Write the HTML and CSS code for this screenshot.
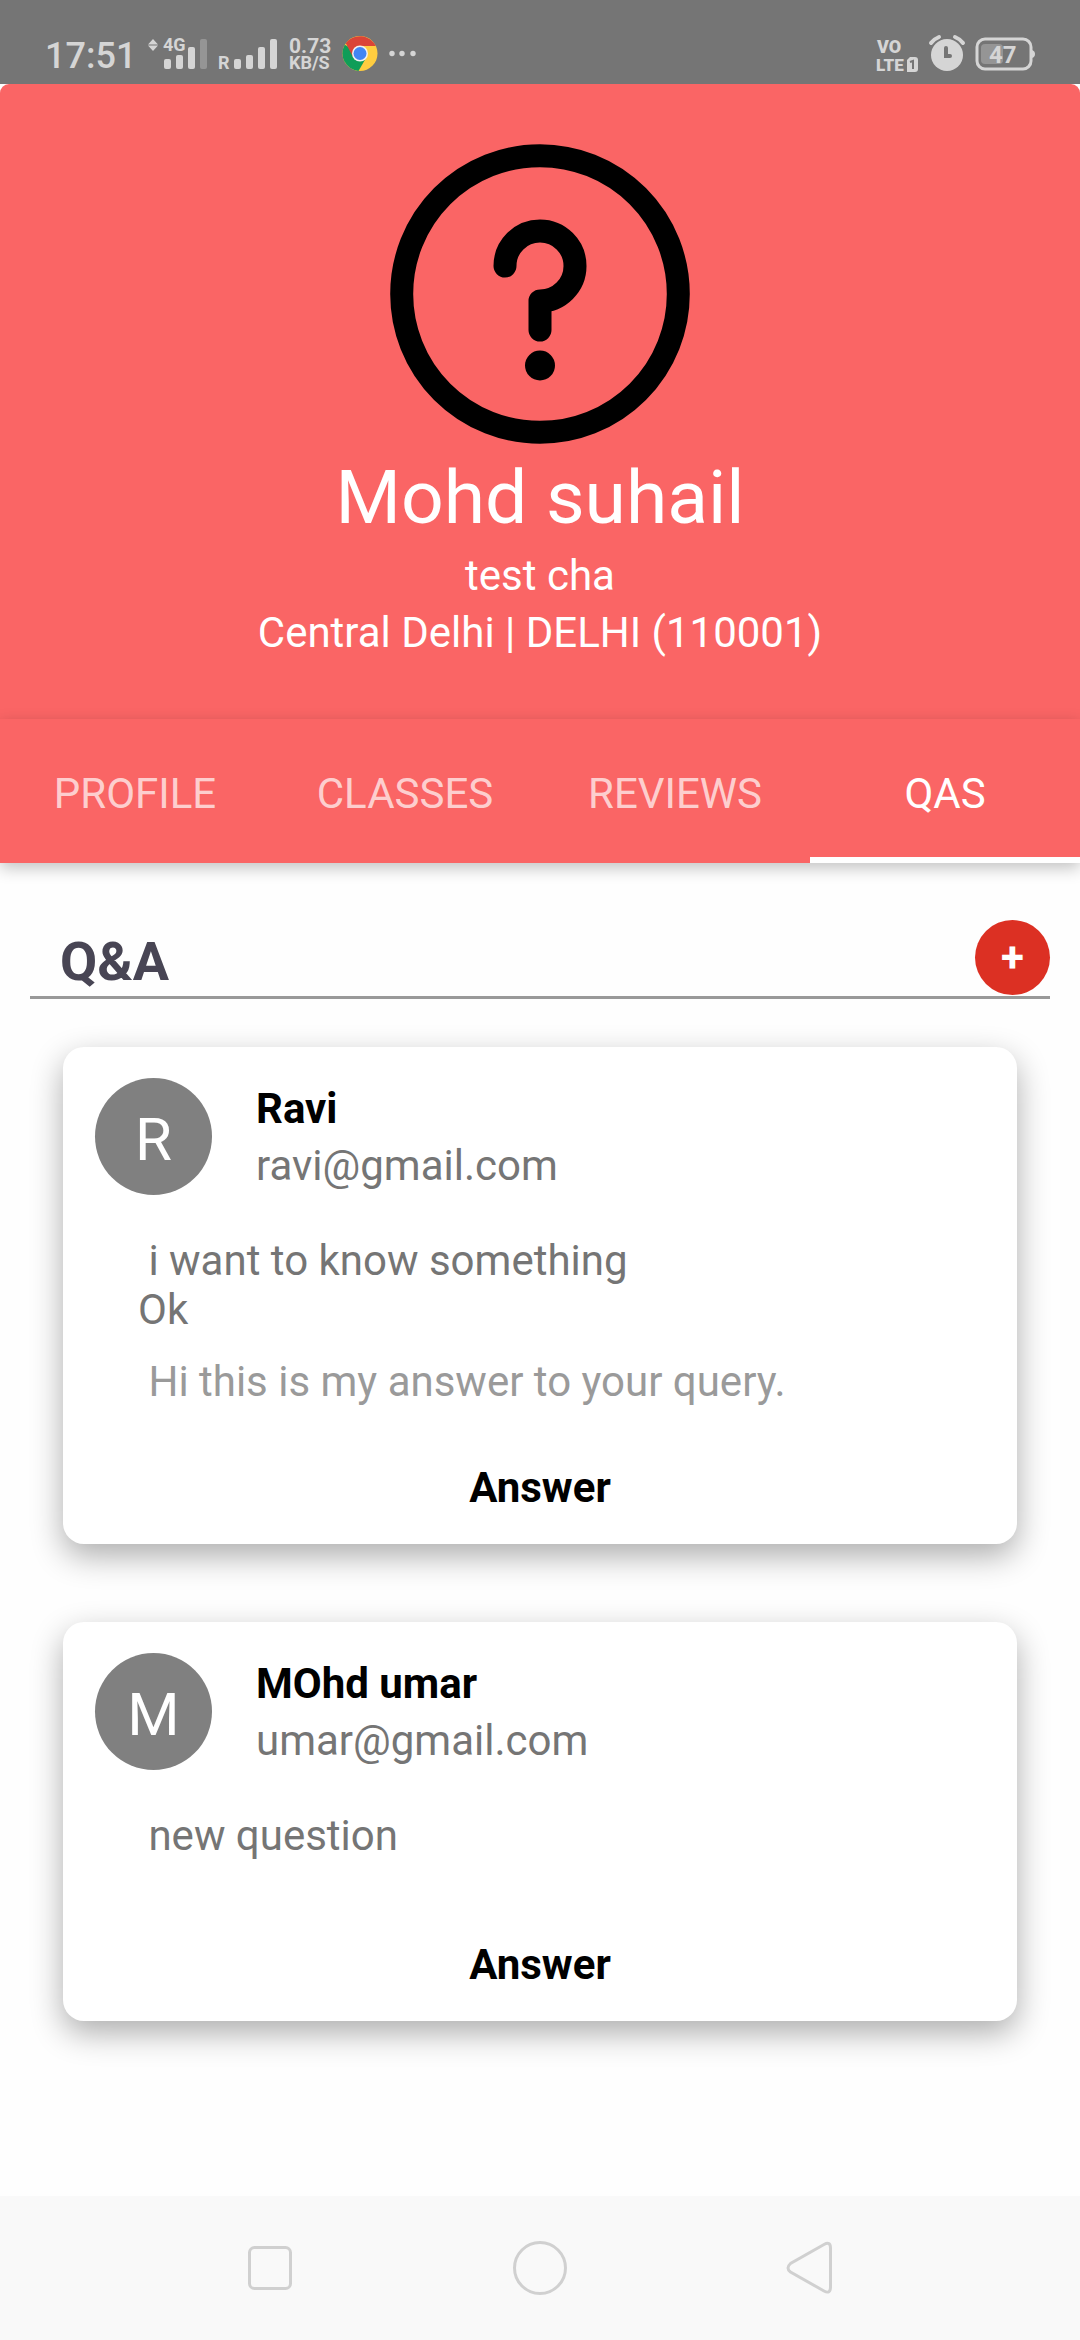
FILE: index.html
```html
<!DOCTYPE html>
<html lang="en">
<head>
<meta charset="utf-8">
<meta name="viewport" content="width=device-width">
<title>Mohd suhail – Q&amp;A</title>
<link rel="stylesheet" href="styles.css">
</head>
<body>
<div class="screen">
  <div class="status">
    <span class="clock">17:51</span>
    <svg class="status-icon" width="60" height="40" viewBox="0 0 60 40">
      <path d="M5 5l5 5.500H0zM5 17l5-5.500H0z"/>
      <text class="tiny-label" x="15" y="17">4G</text>
      <rect x="16" y="25" width="7" height="10" rx="2"/>
      <rect x="28" y="21" width="7" height="14" rx="2"/>
      <rect x="40" y="13" width="7" height="22" rx="2"/>
      <rect class="dim" x="52" y="5" width="7" height="30" rx="2"/>
    </svg>
    <svg class="status-icon" width="59" height="40" viewBox="0 0 59 40">
      <text class="tiny-label" x="-1" y="35">R</text>
      <rect x="15" y="25" width="7" height="10" rx="2"/>
      <rect x="27" y="21" width="7" height="14" rx="2"/>
      <rect x="39" y="13" width="7" height="22" rx="2"/>
      <rect x="51" y="5" width="7" height="30" rx="2"/>
    </svg>
    <svg class="status-icon" width="42" height="40" viewBox="0 0 42 40">
      <text class="speed" x="0" y="19">0.73</text>
      <text class="tiny-label" x="0" y="35">KB/S</text>
    </svg>
    <svg class="status-icon" width="36" height="40" viewBox="0 0 36 40">
      <circle cx="18" cy="19.500" r="17.500" fill="#ffcd40"/>
      <path d="M18 19.500L2.800 10.800A17.500 17.500 0 0 0 16.500 36.900L24 24z" fill="#0f9d58"/>
      <path d="M18 19.500L10.700 22.500L3.800 9.300A17.500 17.500 0 0 1 33.700 12.100H18z" fill="#db4437"/>
      <circle cx="18" cy="19.500" r="8" fill="#f1f1f1"/>
      <circle cx="18" cy="19.500" r="6.500" fill="#4285f4"/>
    </svg>
    <svg class="status-icon" width="27" height="40" viewBox="0 0 27 40">
      <circle cx="3" cy="19.500" r="2.700"/><circle cx="13" cy="19.500" r="2.700"/><circle cx="24" cy="19.500" r="2.700"/>
    </svg>
    <svg class="status-icon status-right" width="42" height="40" viewBox="0 0 42 40">
      <text class="volte" x="1" y="19">VO</text>
      <text class="volte-small" x="0" y="37">LTE</text>
      <path d="M34 23h5a3 3 0 0 1 3 3v9a3 3 0 0 1-3 3h-8V26z"/>
      <path class="cut" d="M34 28l3-1v8"/>
    </svg>
    <svg class="status-icon" width="36" height="40" viewBox="0 0 36 40">
      <circle cx="18" cy="21" r="16"/>
      <path class="ear" d="M2 9Q5 5 10 3M34 9Q31 5 26 3"/>
      <path class="hands" d="M17 14v8h4"/>
    </svg>
    <svg class="status-icon" width="59" height="40" viewBox="0 0 59 40">
      <rect class="shell" x="1" y="5" width="54" height="30" rx="8"/>
      <path d="M56 16q3 1 3 4t-3 4z"/>
      <rect class="dim" x="5" y="10" width="22" height="20" rx="4"/>
      <text class="charge" x="13" y="29">47</text>
    </svg>
  </div>

  <header class="profile">
    <svg class="photo" width="300" height="300" viewBox="0 0 300 300" role="img" aria-label="No photo">
      <circle cx="150" cy="150" r="138.300"/>
      <path d="M115 122a35 35 0 1 1 35 35v29"/>
      <circle class="dot" cx="150" cy="221.500" r="15"/>
    </svg>
    <h1 class="name">Mohd suhail</h1>
    <p class="detail">test cha</p>
    <p class="detail">Central Delhi | DELHI (110001)</p>
  </header>

  <nav class="tabs">
    <a class="tab" href="#profile">PROFILE</a>
    <a class="tab" href="#classes">CLASSES</a>
    <a class="tab" href="#reviews">REVIEWS</a>
    <a class="tab tab-active" href="#qas" aria-current="page">QAS</a>
  </nav>

  <main class="content" id="qas">
    <div class="section-head">
      <h2 class="section-title">Q&amp;A</h2>
      <button class="add" type="button" aria-label="Add a question">+</button>
    </div>

    <div class="cards">
      <article class="card">
        <div class="author">
          <span class="avatar">R</span>
          <div>
            <h3 class="author-name">Ravi</h3>
            <p class="author-mail">ravi@gmail.com</p>
          </div>
        </div>
        <p class="question"> i want to know something
Ok</p>
        <p class="reply"> Hi this is my answer to your query.</p>
        <button class="answer" type="button">Answer</button>
      </article>

      <article class="card">
        <div class="author">
          <span class="avatar">M</span>
          <div>
            <h3 class="author-name">MOhd umar</h3>
            <p class="author-mail">umar@gmail.com</p>
          </div>
        </div>
        <p class="question"> new question</p>
        <p class="reply"></p>
        <button class="answer" type="button">Answer</button>
      </article>
    </div>
  </main>

  <footer class="system-nav">
    <button class="system-button" type="button" aria-label="Recent apps">
      <svg width="56" height="56" viewBox="0 0 56 56"><rect x="7.500" y="7.500" width="41" height="41" rx="5"/></svg>
    </button>
    <button class="system-button" type="button" aria-label="Home">
      <svg width="56" height="56" viewBox="0 0 56 56"><circle cx="28" cy="28" r="25.500"/></svg>
    </button>
    <button class="system-button" type="button" aria-label="Back">
      <svg width="56" height="56" viewBox="0 0 56 56"><path d="M42 4.500Q48.500 1 48.500 8V47Q48.500 54.500 42 51L8.500 32Q3.500 28 8.500 23.500Z"/></svg>
    </button>
  </footer>
</div>
</body>
</html>
```
FILE: styles.css
```css
* {
  box-sizing: border-box;
}

body,
h1,
h2,
h3,
p {
  margin: 0;
}

body {
  background: #fefefe;
  color: #757575;
  font-family: Roboto, "Liberation Sans", sans-serif;
  font-size: 42px;
  line-height: 49px;
}

button {
  border: 0;
  font: inherit;
}

svg {
  display: block;
}

.screen {
  display: flex;
  flex-direction: column;
  min-height: 100vh;
}

/* Status bar */
.status {
  display: flex;
  align-items: flex-end;
  gap: 11px;
  height: 84px;
  padding: 0 45px 10px;
  background: #757575;
  color: #d5d5d5;
}

.clock {
  width: 92px;
  font-size: 36px;
  font-weight: 500;
  line-height: 36px;
}

.status-icon {
  flex: none;
  overflow: visible;
  fill: #d5d5d5;
  font-weight: 700;
}

.status-right {
  margin-left: auto;
}

.dim {
  fill: #959595;
}

.tiny-label {
  font-size: 18px;
}

.speed {
  font-size: 21px;
}

.volte {
  font-size: 18px;
  font-weight: 900;
}

.volte-small {
  font-size: 17px;
  font-weight: 900;
}

.charge {
  font-size: 24px;
}

.cut,
.ear,
.hands,
.shell {
  fill: none;
  stroke: #757575;
  stroke-width: 2px;
}

.ear {
  stroke: #d5d5d5;
  stroke-width: 4px;
  stroke-linecap: round;
}

.hands {
  stroke-width: 4px;
  stroke-linecap: round;
}

.shell {
  stroke: #d5d5d5;
  stroke-width: 3px;
}

/* Profile header */
.profile {
  display: flex;
  flex-direction: column;
  align-items: center;
  padding: 60px 30px 58px;
  border-radius: 9px 9px 0 0;
  background: #fa6565;
  color: #fff;
  text-align: center;
}

.photo {
  margin-bottom: 3px;
  fill: none;
  stroke: #000;
  stroke-width: 23px;
  stroke-linecap: round;
  stroke-linejoin: round;
}

.dot {
  fill: #000;
  stroke: none;
}

.name {
  font-size: 75px;
  font-weight: 400;
  line-height: 100px;
}

.detail {
  line-height: 57px;
}

/* Tabs */
.tabs {
  display: grid;
  grid-template-columns: repeat(4, 1fr);
  background: #fa6565;
  box-shadow: 0 5px 15px rgba(0, 0, 0, 0.24);
}

.tab {
  padding: 50px 0 39px;
  border-bottom: 6px solid transparent;
  color: rgba(255, 255, 255, 0.7);
  text-align: center;
  text-decoration: none;
}

.tab-active {
  border-bottom-color: #fff;
  color: #fff;
}

/* Questions */
.content {
  padding: 57px 30px 60px;
}

.section-head {
  display: flex;
  align-items: flex-end;
  justify-content: space-between;
  padding: 0 0 1px 30px;
  border-bottom: 3px solid #999;
}

.section-title {
  color: #484554;
  font-size: 54px;
  line-height: 66px;
}

.add {
  width: 75px;
  height: 75px;
  padding: 0;
  border-radius: 50%;
  background: #dc3023;
  color: #fff;
  font-weight: 700;
}

.cards {
  display: grid;
  gap: 78px;
  padding: 48px 33px 0;
}

.card {
  display: flex;
  flex-direction: column;
  border-radius: 21px;
  background: #fff;
  box-shadow: 0 12px 32px rgba(0, 0, 0, 0.32);
}

.author {
  display: flex;
  align-items: center;
  gap: 44px;
  padding: 31px 32px 41px;
  line-height: 57px;
}

.avatar {
  display: grid;
  place-items: center;
  width: 117px;
  height: 117px;
  padding-top: 5px;
  border-radius: 50%;
  background: #808080;
  color: #fff;
  font-size: 60px;
}

.author-name {
  color: #000;
  font-size: 42px;
}

.question,
.reply {
  padding: 0 75px;
  white-space: pre-wrap;
}

.question {
  margin-bottom: 23px;
}

.reply {
  margin-bottom: 24px;
  color: #9a9a9a;
}

.answer {
  padding: 33px 0 32px;
  background: none;
  color: #000;
  font-weight: 700;
}

/* System navigation */
.system-nav {
  display: grid;
  grid-template-columns: repeat(3, 1fr);
  margin-top: auto;
  padding: 0 12.5%;
  background: #f9f9f9;
}

.system-button {
  display: grid;
  place-items: center;
  height: 144px;
  padding: 0;
  background: none;
  fill: none;
  stroke: #d0d0d0;
  stroke-width: 3px;
}
```
